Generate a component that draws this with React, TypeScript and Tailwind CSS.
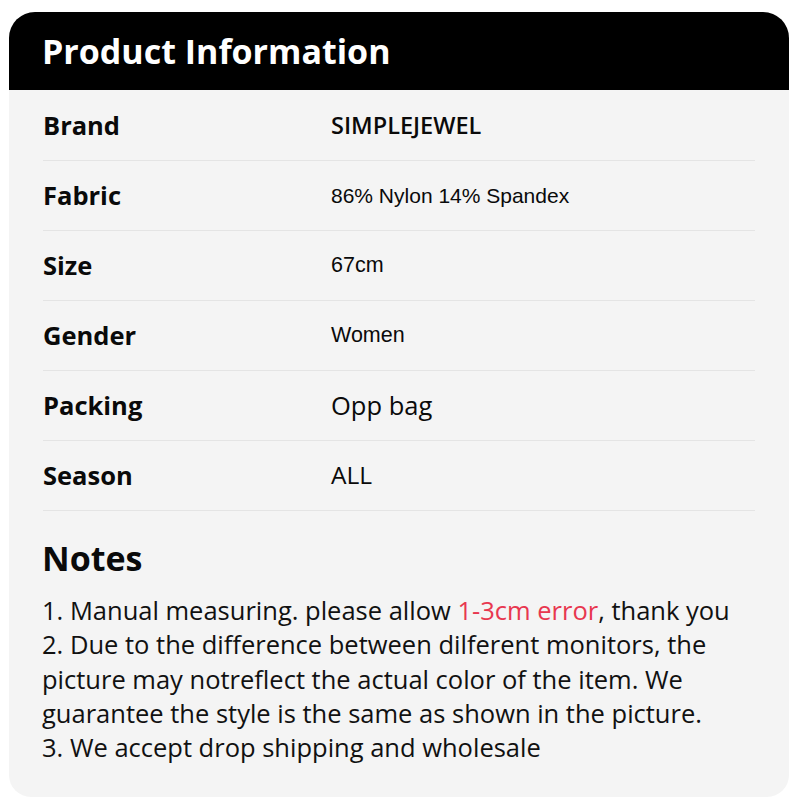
import React from "react";

type Row = { label: string; value: string; valueClass: string };

const rows: Row[] = [
  { label: "Brand", value: "SIMPLEJEWEL", valueClass: "font-['Open_Sans',sans-serif] font-semibold text-[23.5px]" },
  { label: "Fabric", value: "86% Nylon 14% Spandex", valueClass: "font-['Liberation_Sans',Arial,sans-serif] text-[21px]" },
  { label: "Size", value: "67cm", valueClass: "font-['Liberation_Sans',Arial,sans-serif] text-[21.5px]" },
  { label: "Gender", value: "Women", valueClass: "font-['Liberation_Sans',Arial,sans-serif] text-[21.5px]" },
  { label: "Packing", value: "Opp bag", valueClass: "font-['Open_Sans',sans-serif] text-[25.5px]" },
  { label: "Season", value: "ALL", valueClass: "font-['Open_Sans',sans-serif] text-[24.5px]" },
];

const App: React.FC = () => {
  return (
    <div className="w-[800px] h-[800px] bg-white pt-[12px] pl-[9px] font-['Open_Sans',sans-serif]">
      <div className="w-[780px] h-[785px] rounded-t-[26px] rounded-b-[22px] bg-[#f4f4f4] overflow-hidden">
        <div className="h-[78px] bg-black flex items-center px-[33px]">
          <h1 className="text-white text-[34px] font-bold leading-none">Product Information</h1>
        </div>

        <div className="px-[34px] pt-[1px]">
          {rows.map((row) => (
            <div key={row.label} className="h-[70px] flex items-center border-b border-[#e4e4e4]">
              <div className="w-[288px] text-[25.5px] font-bold text-[#0a0a0a]">{row.label}</div>
              <div className={`text-[#0a0a0a] ${row.valueClass}`}>{row.value}</div>
            </div>
          ))}
        </div>

        <div className="px-[33px] pt-[24px]">
          <h2 className="text-[34px] font-bold leading-[46px] text-[#0a0a0a]">Notes</h2>
          <div className="mt-[12px] text-[25.5px] leading-[34.3px] text-[#111] whitespace-nowrap">
            <p>
              1. Manual measuring. please allow <span className="text-[#e8374f]">1-3cm error</span>, thank you
            </p>
            <p>
              2. Due to the difference between dilferent monitors, the
              <br />
              picture may notreflect the actual color of the item. We
              <br />
              guarantee the style is the same as shown in the picture.
            </p>
            <p>3. We accept drop shipping and wholesale</p>
          </div>
        </div>
      </div>
    </div>
  );
};

export default App;
